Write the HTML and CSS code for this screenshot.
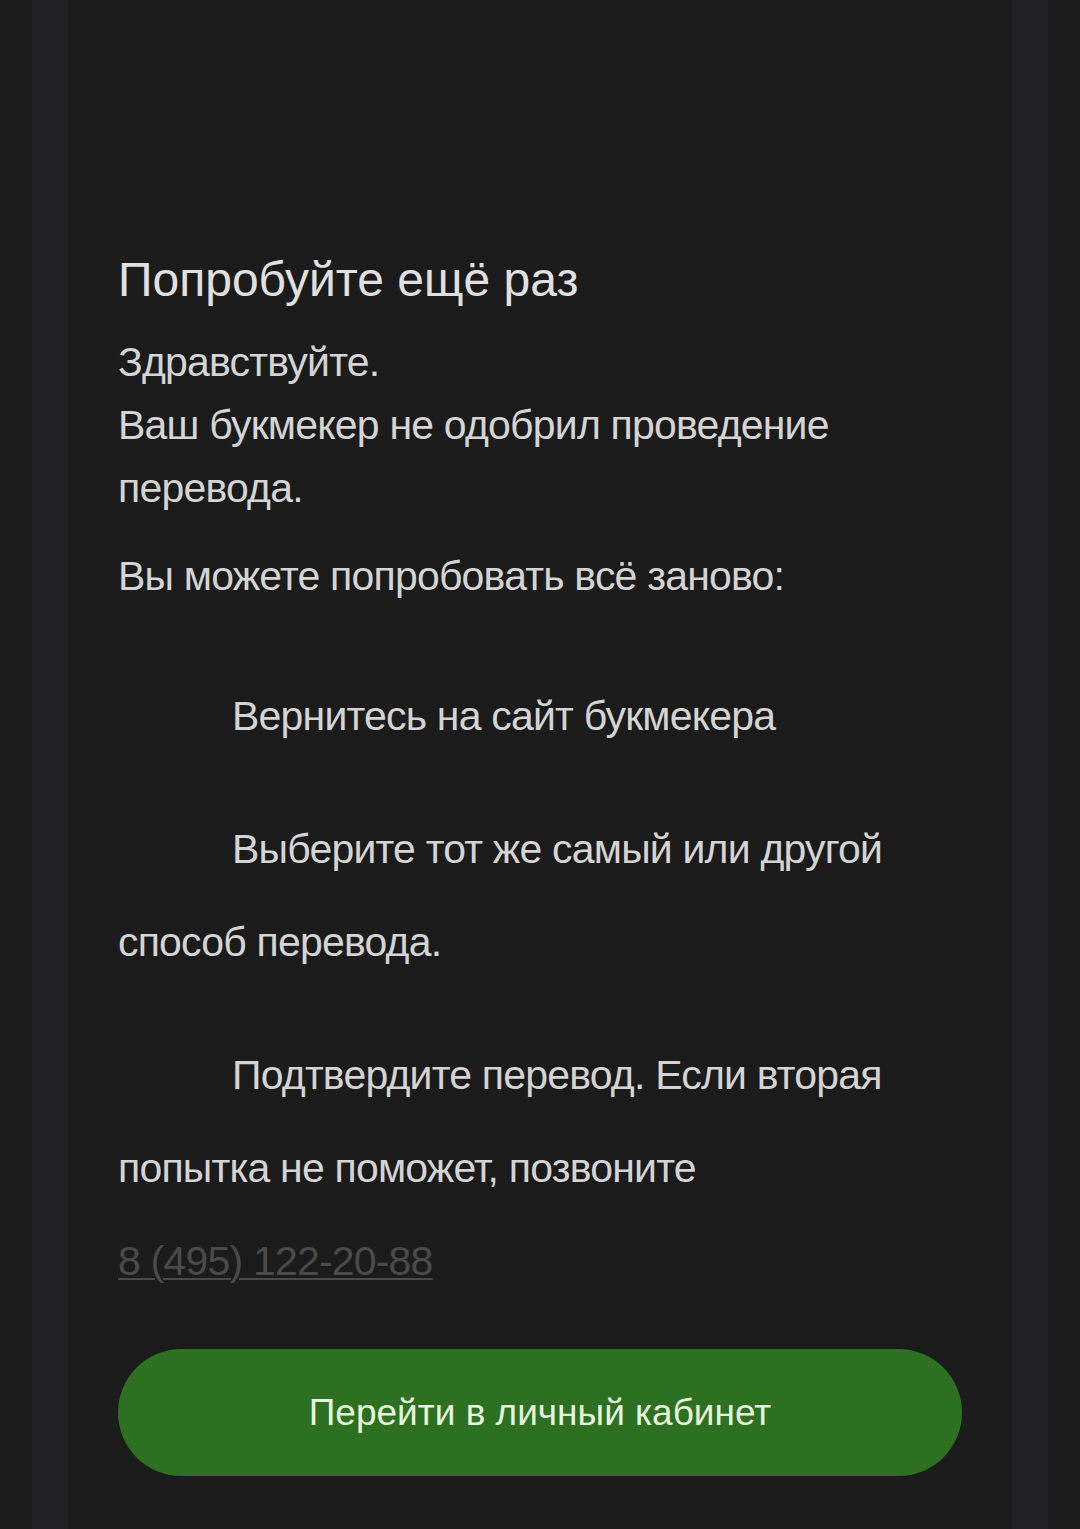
FILE: index.html
```html
<!DOCTYPE html>
<html lang="ru">
<head>
<meta charset="utf-8">
<title>Попробуйте ещё раз</title>
<link rel="stylesheet" href="styles.css">
</head>
<body>
<div class="page">
  <div class="frame">
    <main class="panel">
      <h1 class="title">Попробуйте ещё раз</h1>
      <p class="text">Здравствуйте.<br>Ваш букмекер не одобрил проведение перевода.</p>
      <p class="text lead">Вы можете попробовать всё заново:</p>
      <p class="step first">Вернитесь на сайт букмекера</p>
      <p class="step">Выберите тот же самый или другой способ перевода.</p>
      <p class="step">Подтвердите перевод. Если вторая попытка не поможет, позвоните <a class="phone" href="#">8 (495) 122-20-88</a></p>
      <a class="button" href="#">Перейти в личный кабинет</a>
    </main>
  </div>
</div>
</body>
</html>
```

FILE: styles.css
```css
html, body {
  margin: 0;
  padding: 0;
  background: #1b1b1b;
}
body {
  font-family: "Liberation Sans", Arial, sans-serif;
  color: #d4d4d4;
}
.page {
  padding: 0 32px;
  min-height: 1529px;
  box-sizing: border-box;
  display: flex;
}
.frame {
  flex: 1;
  background: #222225;
  padding: 0 36px;
  display: flex;
}
.panel {
  flex: 1;
  background: #1b1b1b;
  padding: 250px 50px 52px;
  display: flex;
  flex-direction: column;
}
.title {
  margin: 0 0 21px;
  font-size: 48px;
  line-height: 60px;
  font-weight: 400;
  color: #e0e0e0;
}
.text {
  margin: 0;
  font-size: 41px;
  letter-spacing: -0.8px;
  line-height: 63px;
}
.lead {
  margin-top: 25px;
}
.step {
  margin: 40px 0 0;
  font-size: 41px;
  letter-spacing: -0.8px;
  line-height: 93px;
  text-indent: 114px;
}
.step.first {
  margin-top: 62px;
}
.phone {
  color: #4a4a4a;
  white-space: nowrap;
  text-decoration: underline;
  text-underline-offset: 3px;
  text-decoration-thickness: 2px;
}
.button {
  margin-top: 41px;
  height: 127px;
  border-radius: 64px;
  background: #2e7021;
  color: #e6f6de;
  font-size: 37px;
  text-decoration: none;
  display: flex;
  align-items: center;
  justify-content: center;
}
```
